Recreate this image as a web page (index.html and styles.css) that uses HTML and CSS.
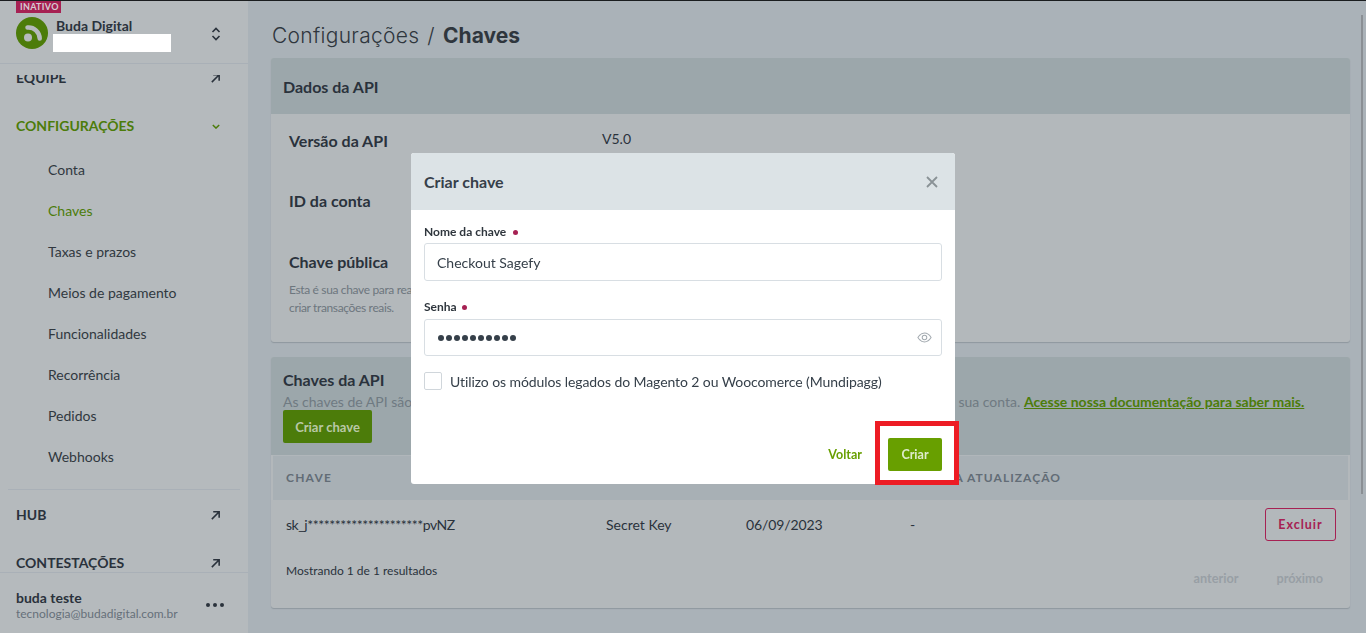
FILE: index.html
```html
<!DOCTYPE html>
<html lang="pt-BR">
<head>
<meta charset="utf-8">
<title>Chaves</title>
<link rel="stylesheet" href="styles.css">
</head>
<body>
<div class="app">
  <aside class="sidebar">
    <div class="account">
      <span class="badge">INATIVO</span>
      <div class="account-row">
        <svg class="logo" viewBox="0 0 32 32" width="32" height="32"><circle cx="16" cy="16" r="16" fill="#4c7c0a"/><circle cx="12" cy="20.500" r="4" fill="#b5babd"/><path d="M11.500 10.500c6.500-.6 12 4.500 12.200 11" fill="none" stroke="#b5babd" stroke-width="4.500" stroke-linecap="round"/></svg>
        <div class="account-text">
          <span class="account-name">Buda Digital</span>
          <span class="account-mask"></span>
        </div>
        <svg class="updown" viewBox="0 0 10 16" width="10" height="16"><path d="M1.500 6 5 2.500 8.500 6M1.500 10 5 13.500 8.500 10" fill="none" stroke="#2a323c" stroke-width="1.600"/></svg>
      </div>
    </div>
    <nav class="nav">
      <div class="nav-scroll">
        <div class="nav-item"><span>EQUIPE</span><svg class="arrow" viewBox="0 0 12 12" width="11" height="11"><path d="M2 10 9.500 2.500M3.500 2h6.500v6.500" fill="none" stroke="#2a323c" stroke-width="1.700"/></svg></div>
        <div class="nav-item nav-active"><span>CONFIGURAÇÕES</span><svg class="chev" viewBox="0 0 10 6" width="8" height="5"><path d="M1 1 5 5 9 1" fill="none" stroke="#4c7c0a" stroke-width="1.800"/></svg></div>
        <ul class="subnav">
          <li>Conta</li>
          <li class="sub-active">Chaves</li>
          <li>Taxas e prazos</li>
          <li>Meios de pagamento</li>
          <li>Funcionalidades</li>
          <li>Recorrência</li>
          <li>Pedidos</li>
          <li>Webhooks</li>
        </ul>
        <div class="nav-divider"></div>
        <div class="nav-item"><span>HUB</span><svg class="arrow" viewBox="0 0 12 12" width="11" height="11"><path d="M2 10 9.500 2.500M3.500 2h6.500v6.500" fill="none" stroke="#2a323c" stroke-width="1.700"/></svg></div>
        <div class="nav-item"><span>CONTESTAÇÕES</span><svg class="arrow" viewBox="0 0 12 12" width="11" height="11"><path d="M2 10 9.500 2.500M3.500 2h6.500v6.500" fill="none" stroke="#2a323c" stroke-width="1.700"/></svg></div>
      </div>
    </nav>
    <div class="user">
      <div class="user-text">
        <strong>buda teste</strong>
        <span>tecnologia@budadigital.com.br</span>
      </div>
      <div class="dots"><i></i><i></i><i></i></div>
    </div>
  </aside>

  <main class="main">
    <h1 class="title"><span class="crumb">Configurações</span> <span class="slash">/</span> <b>Chaves</b></h1>

    <section class="panel panel-data">
      <header class="panel-head"><h2>Dados da API</h2></header>
      <div class="panel-body">
        <div class="data-row row-version"><h3>Versão da API</h3><span>V5.0</span></div>
        <div class="data-row row-id"><h3>ID da conta</h3></div>
        <div class="data-row row-public">
          <div>
            <h3>Chave pública</h3>
            <p>Esta é sua chave para realizar integrações e<br>criar transações reais.</p>
          </div>
        </div>
      </div>
    </section>

    <section class="panel panel-keys">
      <header class="keys-head">
        <h2>Chaves da API</h2>
        <p>As chaves de API são utilizadas para autenticar as requisições feitas à sua API pela sua aplicação e identificar a sua conta. <a href="#">Acesse nossa documentação para saber mais.</a></p>
        <button class="btn-create" type="button">Criar chave</button>
      </header>
      <div class="table">
        <div class="t-head">
          <span class="c-key">CHAVE</span>
          <span class="c-type">TIPO</span>
          <span class="c-date">CRIAÇÃO</span>
          <span class="c-upd">ÚLTIMA ATUALIZAÇÃO</span>
        </div>
        <div class="t-row">
          <span class="c-key key-mask">sk_j*********************pvNZ</span>
          <span class="c-type">Secret Key</span>
          <span class="c-date">06/09/2023</span>
          <span class="c-upd">-</span>
          <button class="btn-delete" type="button">Excluir</button>
        </div>
        <div class="t-foot">
          <span class="showing">Mostrando 1 de 1 resultados</span>
          <div class="pager"><span>anterior</span><span>próximo</span></div>
        </div>
      </div>
    </section>
  </main>
  <div class="scrollbar"></div>
</div>

<div class="overlay">
  <div class="modal">
    <header class="modal-head">
      <h2>Criar chave</h2>
      <svg class="close" viewBox="0 0 12 12" width="12" height="12"><path d="M1 1 11 11M11 1 1 11" stroke="#8a9296" stroke-width="1.800" fill="none"/></svg>
    </header>
    <div class="modal-body">
      <label class="field-label label-first">Nome da chave <i class="req req-wide"></i></label>
      <div class="input">Checkout Sagefy</div>
      <label class="field-label label-second">Senha <i class="req"></i></label>
      <div class="input input-pass">
        <span class="pass-dots"><i></i><i></i><i></i><i></i><i></i><i></i><i></i><i></i><i></i><i></i></span>
        <svg viewBox="0 0 16 12" width="15" height="11"><path d="M.8 6C2.800 2.800 5.200 1.200 8 1.200S13.200 2.800 15.200 6C13.200 9.200 10.800 10.800 8 10.800S2.800 9.200.8 6Z" fill="none" stroke="#a3aab0" stroke-width="1.100"/><circle cx="8" cy="6" r="2.500" fill="none" stroke="#a3aab0" stroke-width="1.100"/></svg>
      </div>
      <div class="check-row"><span class="checkbox"></span><span>Utilizo os módulos legados do Magento 2 ou Woocomerce (Mundipagg)</span></div>
    </div>
    <footer class="modal-foot">
      <span class="btn-back">Voltar</span>
      <button class="btn-submit" type="button">Criar</button>
    </footer>
    <div class="highlight"></div>
  </div>
</div>
</body>
</html>
```

FILE: styles.css
```css
* { box-sizing: border-box; }
html, body { margin: 0; height: 100%; overflow: hidden; }
body { font-family: Lato, "Liberation Sans", sans-serif; color: #2a323c; background: #aab2b8; }
h1, h2, h3, p, ul { margin: 0; padding: 0; }
ul { list-style: none; }
button { font-family: inherit; border: 0; }

.app { display: flex; height: 633px; border-top: 1px solid #1a1d1f; }

/* sidebar */
.sidebar { width: 248px; flex: none; height: 632px; display: flex; flex-direction: column; background: #b5babd; }
.account { height: 74px; flex: none; padding-left: 16px; }
.badge { display: block; width: 45px; height: 12px; background: #a62153; color: #d6ccd2; font-size: 9px; font-weight: 700; letter-spacing: .3px; line-height: 12px; padding-left: 4px; }
.account-row { display: flex; align-items: flex-start; padding-top: 4px; height: 51px; margin-left: -16px; padding-left: 16px; border-bottom: 1px solid #a9b0b7; }
.logo { flex: none; }
.account-text { display: flex; flex-direction: column; margin-top: -1px; margin-left: 8px; }
.account-name { font-size: 14px; font-weight: 700; line-height: 20px; height: 18px; }
.account-mask { display: block; width: 118px; height: 18px; background: #fff; margin-left: -3px; }
.updown { margin-left: auto; margin-right: 27px; margin-top: 9px; }

.nav { flex: 1; min-height: 0; overflow: hidden; }
.nav-scroll { margin-top: -21px; }
.nav-item { height: 48px; display: flex; align-items: center; justify-content: space-between; padding: 0 27px 0 16px; font-size: 14px; font-weight: 700; line-height: 20px; color: #2a323c; }
.nav-active { color: #4c7c0a; padding-right: 28px; }
.subnav { margin-top: -1px; }
.subnav li { height: 41px; line-height: 41px; padding-left: 48px; font-size: 14px; color: #30383f; }
.subnav li.sub-active { color: #4c7c0a; }
.nav-divider { height: 1px; background: #a9b0b7; margin: 12px 8px 1px; }

.user { height: 61px; flex: none; border-top: 1px solid #a9b0b7; display: flex; align-items: center; justify-content: space-between; padding: 4px 24px 0 16px; }
.user-text { display: flex; flex-direction: column; }
.user-text strong { font-size: 14px; line-height: 16px; font-weight: 700; }
.user-text span { font-size: 12px; line-height: 15px; color: #66707a; }
.dots { display: flex; gap: 3px; }
.dots i { width: 4px; height: 4px; border-radius: 50%; background: #2a323c; }

/* main */
.main { flex: 1; min-width: 0; padding: 0 11px 0 23px; }
.title { font-family: Inter, sans-serif; font-weight: 300; font-size: 21px; line-height: 28px; padding: 21px 0 0 1px; height: 57px; color: #2f363d; white-space: nowrap; }
.crumb { letter-spacing: .3px; }
.title b { font-weight: 700; }
.slash { margin: 0 2.500px 0 2px; }
.panel { border-radius: 3px; box-shadow: 0 1px 1px rgba(60,70,80,.25); background: #b3b8bb; overflow: hidden; }
.panel-data { height: 284px; }
.panel-head { height: 56px; background: #9ca7ab; display: flex; align-items: center; padding-left: 12px; }
.panel-head h2 { font-size: 16px; font-weight: 700; }
.panel-body { padding: 0 18px; }
.data-row { display: flex; }
.data-row h3 { font-size: 16px; font-weight: 700; line-height: 22px; width: 313px; }
.row-version { padding-top: 16px; height: 56px; }
.row-version span { font-size: 14px; line-height: 20px; margin-top: -1px; }
.row-id { height: 61px; padding-top: 20px; }
.row-public { padding-top: 20px; }
.row-public p { font-size: 12px; letter-spacing: -.35px; line-height: 18px; color: #6d767e; margin-top: 8px; }

.panel-keys { margin-top: 15px; height: 251px; }
.keys-head { height: 98px; background: #9ca7ab; padding: 13px 12px 0; }
.keys-head h2 { font-size: 16px; font-weight: 700; line-height: 19px; }
.keys-head p { font-size: 14px; line-height: 20px; color: #6f7a82; white-space: nowrap; margin-top: 3px; margin-bottom: -2px; }
.keys-head a { color: #4c7c0a; font-weight: 700; }
.btn-create { display: block; width: 89px; height: 33px; background: #4c7c0a; color: #b9c8a6; border-radius: 2px; font-size: 13px; font-weight: 700; padding: 0; }

.table { margin: 0 2px; }
.t-head, .t-row { display: flex; align-items: center; padding-left: 13px; }
.t-head { height: 45px; background: #a8b0b5; border-top: 1px solid #b0b6ba; font-size: 12px; font-weight: 700; letter-spacing: 1.200px; color: #626c76; padding-bottom: 2px; }
.t-row { height: 49px; font-size: 14px; color: #2a323c; }
.c-key { width: 320px; flex: none; }
.key-mask { letter-spacing: -.45px; }
.c-type { width: 140px; flex: none; }
.c-date { width: 164px; flex: none; letter-spacing: -.1px; }
.t-head .c-upd { margin-left: 3px; white-space: nowrap; letter-spacing: 1.050px; }
.btn-delete { margin-left: auto; margin-right: 12px; width: 71px; height: 33px; border: 1px solid #a62153; background: transparent; color: #a62153; border-radius: 3px; font-size: 12.500px; font-weight: 700; letter-spacing: 1px; padding: 0; }
.t-foot { display: flex; justify-content: space-between; padding: 0 25px 0 13px; }
.showing { font-size: 12px; line-height: 16px; color: #2a323c; margin-top: 14px; }
.pager { display: flex; gap: 38px; margin-top: 21px; font-size: 12.700px; font-weight: 700; line-height: 16px; color: #989fa5; }

.scrollbar { width: 2px; height: 479px; margin: 14px 3px 0 0; flex: none; background: #8a8f94; }

/* modal */
.overlay { position: fixed; inset: 0; display: flex; justify-content: center; padding-top: 153px; }
.modal { position: relative; width: 544px; height: 331px; background: #fff; border-radius: 3px; display: flex; flex-direction: column; }
.modal-head { height: 57px; background: #dce3e6; display: flex; align-items: center; justify-content: space-between; padding: 0 17px 0 13px; border-radius: 3px 3px 0 0; flex: none; }
.modal-head h2 { font-size: 16px; font-weight: 700; color: #36404a; }
.modal-body { padding: 0 13px; flex: 1; }
.field-label { display: block; font-size: 12px; font-weight: 700; line-height: 16px; color: #2f363d; }
.label-first { margin-top: 14px; margin-bottom: 3px; }
.label-second { margin-top: 18px; margin-bottom: 4px; }
.req { display: inline-block; width: 5px; height: 5px; border-radius: 50%; background: #a62153; margin-left: 2px; vertical-align: 1px; }
.req-wide { margin-left: 4px; }
.input { height: 38px; border: 1px solid #d8dee3; border-radius: 3px; padding: 0 12px; display: flex; align-items: center; font-size: 14px; color: #36404a; }
.input-pass { height: 37px; justify-content: space-between; padding: 0 9px 0 13px; }
.pass-dots { display: flex; gap: 2px; margin-top: 1px; }
.pass-dots i { width: 6px; height: 6px; border-radius: 50%; background: #36404a; }
.check-row { display: flex; align-items: center; gap: 8px; margin-top: 16px; font-size: 14px; letter-spacing: -.09px; color: #36404a; }
.checkbox { width: 18px; height: 18px; border: 1px solid #d0d6db; border-radius: 2px; }
.modal-foot { height: 62px; flex: none; display: flex; align-items: flex-start; justify-content: flex-end; gap: 26px; padding: 0 13px 0 0; }
.btn-back { font-size: 12.500px; font-weight: 700; color: #689f00; line-height: 33px; margin-top: 16px; }
.btn-submit { width: 54px; height: 33px; margin-top: 16px; background: #689f00; color: #dfeccd; border-radius: 2px; font-size: 12.500px; font-weight: 700; padding: 0; }
.highlight { position: absolute; left: 464px; top: 268px; width: 84px; height: 64px; border: 5px solid #ed1c24; pointer-events: none; }
```
